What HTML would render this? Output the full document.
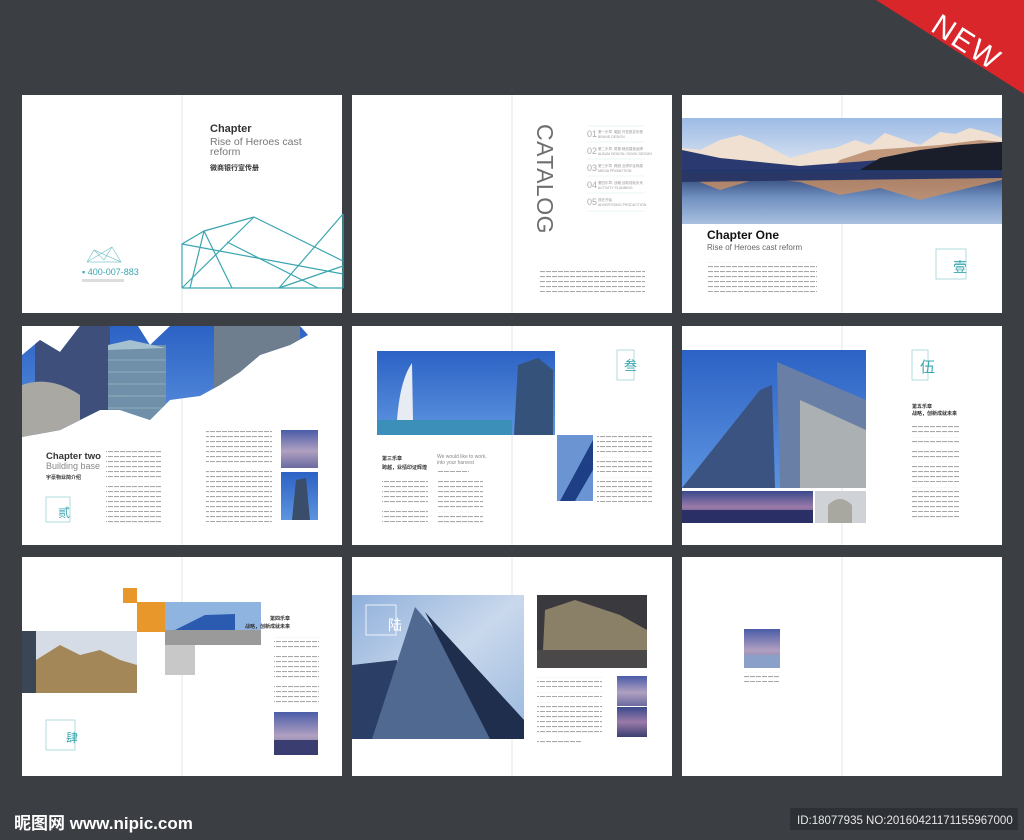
<!DOCTYPE html>
<html><head><meta charset="utf-8"><style>
html,body{margin:0;padding:0;background:#3b3e43;}
svg{display:block;font-family:"Liberation Sans","Noto Sans CJK SC",sans-serif;}
</style></head><body>
<svg width="1024" height="840" viewBox="0 0 1024 840" xmlns="http://www.w3.org/2000/svg">
<defs>
<pattern id="tl" width="6" height="5" patternUnits="userSpaceOnUse"><rect width="5" height="1.1" y="1" fill="#a8a8a8"/></pattern>
<linearGradient id="sky" x1="0" y1="0" x2="0" y2="1"><stop offset="0" stop-color="#9dbbe6"/><stop offset="1" stop-color="#dfe7f2"/></linearGradient>
<linearGradient id="lake" x1="0" y1="0" x2="0" y2="1"><stop offset="0" stop-color="#1f3566"/><stop offset="0.5" stop-color="#6f8fbf"/><stop offset="1" stop-color="#a9c0e0"/></linearGradient>
<linearGradient id="blue" x1="0" y1="0" x2="0" y2="1"><stop offset="0" stop-color="#2c62c4"/><stop offset="1" stop-color="#5d94e0"/></linearGradient>
<linearGradient id="cloud" x1="0" y1="0" x2="1" y2="1"><stop offset="0" stop-color="#8fb0db"/><stop offset="0.5" stop-color="#c9d8ec"/><stop offset="1" stop-color="#9ab8de"/></linearGradient>
<linearGradient id="night" x1="0" y1="0" x2="0" y2="1"><stop offset="0" stop-color="#3a4a8c"/><stop offset="0.5" stop-color="#9a7aa8"/><stop offset="1" stop-color="#3a3f70"/></linearGradient>
<linearGradient id="dusk" x1="0" y1="0" x2="0" y2="1"><stop offset="0" stop-color="#4a5ca8"/><stop offset="0.55" stop-color="#b0a0c0"/><stop offset="1" stop-color="#6a6aa0"/></linearGradient>
<clipPath id="c4"><path d="M22 355 L40 340 L60 352 L80 326 L138 326 L150 345 L170 326 L300 326 L308 335 L290 345 L260 355 L240 372 L220 385 L200 396 L170 400 L150 420 L120 410 L100 410 L60 430 L22 437Z"/></clipPath>
</defs>

<polygon points="876,0 1024,0 1024,94" fill="#d9262a"/>
<text x="965" y="52" fill="#fff" font-size="30" transform="rotate(33 965 45)" text-anchor="middle" letter-spacing="2">NEW</text>

<g fill="#fff">
<rect x="22" y="95" width="320" height="218"/><rect x="352" y="95" width="320" height="218"/><rect x="682" y="95" width="320" height="218"/>
<rect x="22" y="326" width="320" height="219"/><rect x="352" y="326" width="320" height="219"/><rect x="682" y="326" width="320" height="219"/>
<rect x="22" y="557" width="320" height="219"/><rect x="352" y="557" width="320" height="219"/><rect x="682" y="557" width="320" height="219"/>
</g>
<g stroke="#e4e6ea" stroke-width="1">
<line x1="182" y1="95" x2="182" y2="313"/><line x1="512" y1="95" x2="512" y2="313"/><line x1="842" y1="95" x2="842" y2="313"/>
<line x1="182" y1="326" x2="182" y2="545"/><line x1="512" y1="326" x2="512" y2="545"/><line x1="842" y1="326" x2="842" y2="545"/>
<line x1="182" y1="557" x2="182" y2="776"/><line x1="512" y1="557" x2="512" y2="776"/><line x1="842" y1="557" x2="842" y2="776"/>
</g>

<!-- Spread 1 -->
<text x="210" y="132" font-size="11" font-weight="bold" fill="#333">Chapter</text>
<text x="210" y="145" font-size="10.5" fill="#777">Rise of Heroes cast</text>
<text x="210" y="155" font-size="10.5" fill="#777">reform</text>
<text x="210" y="170" font-size="7" font-weight="bold" fill="#333">微商银行宣传册</text>
<g stroke="#3aa6b0" stroke-width="1.2" fill="none">
<polyline points="182,288 182,244 204,231 232,288"/>
<line x1="182" y1="288" x2="343" y2="288"/>
<line x1="204" y1="231" x2="254" y2="217"/>
<line x1="182" y1="288" x2="254" y2="217"/>
<line x1="254" y1="217" x2="343" y2="261"/>
<line x1="182" y1="244" x2="343" y2="274"/>
<line x1="204" y1="231" x2="190" y2="288"/>
<line x1="343" y1="214" x2="279" y2="288"/>
<line x1="227" y1="242" x2="318" y2="288"/>
<line x1="279" y1="288" x2="343" y2="266"/>
<line x1="343" y1="214" x2="343" y2="288"/>
</g>
<g stroke="#7ec6cc" stroke-width="0.7" fill="none"><polyline points="87,262 94,250 104,260 112,247 121,262 87,262"/><line x1="94" y1="250" x2="121" y2="262"/><line x1="87" y1="262" x2="112" y2="247"/></g>
<text x="82" y="275" font-size="9" fill="#3aa6b0">▪ 400-007-883</text>
<rect x="82" y="279" width="42" height="3" fill="#ddd"/>

<!-- Spread 2 -->
<text x="537" y="124" font-size="23" fill="#6f6f6f" transform="rotate(90 537 124)" letter-spacing="0.5">CATALOG</text>
<g font-size="9" fill="#aaa">
<text x="587" y="137">01</text><text x="587" y="154">02</text><text x="587" y="171">03</text><text x="587" y="188">04</text><text x="587" y="205">05</text>
</g>
<g fill="#999" font-size="3.5">
<text x="598" y="133">第一乐章. 崛起 开发蜕变历程</text><text x="598" y="138">BRAND DESIGN</text>
<text x="598" y="150">第二乐章. 筑基 精品建造品牌</text><text x="598" y="155">ALBUM DESIGN / BOOK DESIGN</text>
<text x="598" y="167">第三乐章. 跨越 业绩印证辉煌</text><text x="598" y="172">MEDIA PROMOTION</text>
<text x="598" y="184">第四乐章. 战略 创新成就未来</text><text x="598" y="189">ACTIVITY PLANNING</text>
<text x="598" y="201">现在开始</text><text x="598" y="206">ADVERTISING PRODUCTION</text>
</g>
<g stroke="#d8eaee" stroke-width="0.6"><line x1="587" y1="126" x2="645" y2="126"/><line x1="587" y1="142" x2="645" y2="142"/><line x1="587" y1="159" x2="645" y2="159"/><line x1="587" y1="176" x2="645" y2="176"/><line x1="587" y1="193" x2="645" y2="193"/><line x1="587" y1="211" x2="645" y2="211"/></g>
<rect x="540" y="268" width="105" height="24" fill="url(#tl)"/>

<!-- Spread 3 -->
<rect x="682" y="118" width="320" height="52" fill="url(#sky)"/>
<polygon points="682,148 700,150 720,140 740,135 760,142 790,158 820,150 835,148 855,140 870,145 885,133 905,140 920,145 940,132 955,134 970,128 990,133 1002,138 1002,170 682,170" fill="#efe0d2"/>
<polygon points="840,160 870,150 900,148 940,145 980,140 1002,142 1002,170 830,170" fill="#b07a5a" opacity="0.7"/>
<polygon points="682,150 720,158 760,162 800,166 840,163 880,160 920,152 960,147 1002,142 1002,170 682,170" fill="#2a3a70"/>
<polygon points="880,158 920,150 960,145 1002,142 1002,170 860,170" fill="#1a1d2a"/>
<rect x="682" y="170" width="320" height="54" fill="url(#lake)"/>
<polygon points="682,175 720,190 760,178 800,182 840,195 880,188 920,200 960,190 1002,180 1002,175" fill="#c98e62" opacity="0.8"/>
<polygon points="682,172 1002,172 1002,178 682,182" fill="#2a3766"/>
<text x="707" y="239" font-size="12" font-weight="bold" fill="#111">Chapter One</text>
<text x="707" y="250" font-size="8" fill="#666">Rise of Heroes cast reform</text>
<rect x="707" y="262" width="110" height="11" fill="url(#tl)"/>
<rect x="707" y="276" width="110" height="16" fill="url(#tl)"/>
<rect x="936" y="249" width="30" height="30" fill="none" stroke="#9fd3d6" stroke-width="0.8"/>
<text x="953" y="272" font-size="14" fill="#3aa6b0">壹</text>

<!-- Spread 4 -->
<g clip-path="url(#c4)">
<rect x="22" y="326" width="290" height="112" fill="url(#blue)"/>
<rect x="35" y="326" width="75" height="110" fill="#3d4f7a"/>
<rect x="108" y="345" width="58" height="90" fill="#6f90a8"/>
<polygon points="108,345 130,340 166,348 108,350" fill="#a5c0cf"/>
<rect x="214" y="326" width="86" height="70" fill="#6e7e8e"/>
<path d="M22 385 Q50 375 80 395 L80 440 L22 440Z" fill="#a9a8a3"/>
<g stroke="#e8eef4" stroke-width="0.6" opacity="0.6"><line x1="108" y1="360" x2="166" y2="360"/><line x1="108" y1="372" x2="166" y2="372"/><line x1="108" y1="384" x2="166" y2="384"/><line x1="108" y1="396" x2="166" y2="396"/><line x1="108" y1="408" x2="166" y2="408"/></g>
</g>
<text x="46" y="459" font-size="9.5" font-weight="bold" fill="#333">Chapter two</text>
<text x="46" y="469" font-size="9" fill="#888">Building base</text>
<text x="46" y="479" font-size="5" font-weight="bold" fill="#333">宇豪物业简介绍</text>
<rect x="106" y="448" width="55" height="30" fill="url(#tl)"/>
<rect x="106" y="482" width="55" height="30" fill="url(#tl)"/>
<rect x="106" y="514" width="55" height="10" fill="url(#tl)"/>
<rect x="206" y="430" width="66" height="35" fill="url(#tl)"/>
<rect x="206" y="468" width="66" height="45" fill="url(#tl)"/>
<rect x="206" y="514" width="66" height="8" fill="url(#tl)"/>
<rect x="281" y="430" width="37" height="38" fill="url(#dusk)"/>
<rect x="281" y="472" width="37" height="48" fill="url(#blue)"/>
<polygon points="292,520 296,480 306,478 310,520" fill="#3a4d6a"/>
<rect x="46" y="497" width="24" height="25" fill="none" stroke="#9fd3d6" stroke-width="0.8"/>
<text x="58" y="517" font-size="12" fill="#3aa6b0">贰</text>

<!-- Spread 5 -->
<rect x="377" y="351" width="135" height="84" fill="url(#blue)"/>
<rect x="377" y="420" width="135" height="15" fill="#3c8fb8"/>
<path d="M397 420 Q400 380 412 363 L413 420Z" fill="#e6ecf2"/>
<rect x="512" y="351" width="43" height="84" fill="url(#blue)"/>
<polygon points="514,435 518,365 538,358 553,370 553,435" fill="#34527a"/>
<rect x="557" y="435" width="36" height="66" fill="#6b95d2"/>
<polygon points="560,501 593,440 593,470 575,501" fill="#1e3f86"/>
<rect x="617" y="350" width="17" height="30" fill="none" stroke="#9fd3d6" stroke-width="0.8"/>
<text x="624" y="370" font-size="13" fill="#3aa6b0">叁</text>
<text x="382" y="460" font-size="5" font-weight="bold" fill="#333">第三乐章</text>
<text x="382" y="469" font-size="5" font-weight="bold" fill="#333">跨越，业绩印证辉煌</text>
<text x="437" y="458" font-size="5" fill="#888">We would like to work,</text>
<text x="437" y="464" font-size="5" fill="#888">into your harvest</text>
<rect x="437" y="468" width="32" height="4" fill="url(#tl)"/>
<rect x="382" y="481" width="46" height="22" fill="url(#tl)"/>
<rect x="382" y="510" width="46" height="12" fill="url(#tl)"/>
<rect x="437" y="481" width="46" height="27" fill="url(#tl)"/>
<rect x="437" y="512" width="46" height="14" fill="url(#tl)"/>
<rect x="597" y="432" width="55" height="20" fill="url(#tl)"/>
<rect x="597" y="457" width="55" height="15" fill="url(#tl)"/>
<rect x="597" y="477" width="55" height="25" fill="url(#tl)"/>

<!-- Spread 6 -->
<rect x="682" y="350" width="184" height="138" fill="url(#blue)"/>
<polygon points="682,488 760,390 772,385 775,488" fill="#3a5380"/>
<polygon points="780,488 777,362 866,400 866,488" fill="#6a7fa5"/>
<polygon points="800,488 800,400 866,430 866,488" fill="#c8c6b8" opacity="0.7"/>
<rect x="682" y="491" width="131" height="32" fill="url(#night)"/>
<rect x="682" y="510" width="131" height="13" fill="#2a2f66"/>
<rect x="815" y="491" width="51" height="32" fill="#cfd2d6"/>
<path d="M828 523 L828 505 Q840 493 852 505 L852 523Z" fill="#a9a8a0"/>
<rect x="912" y="350" width="16" height="30" fill="none" stroke="#9fd3d6" stroke-width="0.8"/>
<text x="920" y="372" font-size="15" fill="#3aa6b0">伍</text>
<text x="912" y="408" font-size="5" font-weight="bold" fill="#333">第五乐章</text>
<text x="912" y="415" font-size="5" font-weight="bold" fill="#333">战略，创新成就未来</text>
<rect x="912" y="424" width="47" height="9" fill="url(#tl)"/>
<rect x="912" y="437" width="47" height="9" fill="url(#tl)"/>
<rect x="912" y="450" width="47" height="9" fill="url(#tl)"/>
<rect x="912" y="462" width="47" height="20" fill="url(#tl)"/>
<rect x="912" y="487" width="47" height="25" fill="url(#tl)"/>
<rect x="912" y="515" width="47" height="4" fill="url(#tl)"/>

<!-- Spread 7 -->
<rect x="123" y="588" width="14" height="15" fill="#e8972b"/>
<rect x="137" y="602" width="28" height="30" fill="#e8972b"/>
<rect x="165" y="645" width="30" height="30" fill="#c8c8c8"/>
<rect x="165" y="602" width="96" height="43" fill="#8fb4e0"/>
<rect x="165" y="630" width="96" height="15" fill="#9a9a9a"/>
<polygon points="175,630 205,615 235,614 235,630" fill="#2b5bb0"/>
<rect x="22" y="631" width="115" height="62" fill="#d6dce6"/>
<rect x="22" y="631" width="14" height="62" fill="#3a4555"/>
<polygon points="36,693 36,660 60,645 80,655 100,650 120,660 137,665 137,693" fill="#a38758"/>
<text x="290" y="620" font-size="5" font-weight="bold" fill="#333" text-anchor="end">第四乐章</text>
<text x="290" y="628" font-size="5" font-weight="bold" fill="#333" text-anchor="end">战略，创新成就未来</text>
<rect x="274" y="637" width="45" height="14" fill="url(#tl)"/>
<rect x="274" y="655" width="45" height="24" fill="url(#tl)"/>
<rect x="274" y="683" width="45" height="20" fill="url(#tl)"/>
<rect x="274" y="712" width="44" height="43" fill="url(#dusk)"/>
<rect x="274" y="740" width="44" height="15" fill="#3a3d70"/>
<rect x="46" y="720" width="29" height="30" fill="none" stroke="#9fd3d6" stroke-width="0.8"/>
<text x="66" y="742" font-size="12" fill="#3aa6b0">肆</text>

<!-- Spread 8 -->
<rect x="352" y="595" width="172" height="144" fill="url(#cloud)"/>
<polygon points="352,739 352,665 397,660 397,739" fill="#2a3e66"/>
<polygon points="372,739 415,607 524,733 524,739" fill="#4f6990"/>
<polygon points="425,612 524,720 524,739 490,739" fill="#1e2e4c"/>
<rect x="366" y="605" width="30" height="30" fill="none" stroke="#fff" stroke-width="0.8"/>
<text x="388" y="630" font-size="14" fill="#fff">陆</text>
<rect x="537" y="595" width="110" height="73" fill="#3a3a3e"/>
<polygon points="543,650 545,610 575,600 620,615 647,630 647,650" fill="#8a8068"/>
<rect x="537" y="650" width="110" height="18" fill="#4a4848"/>
<rect x="537" y="677" width="65" height="10" fill="url(#tl)"/>
<rect x="537" y="692" width="65" height="5" fill="url(#tl)"/>
<rect x="537" y="702" width="65" height="10" fill="url(#tl)"/>
<rect x="537" y="716" width="65" height="20" fill="url(#tl)"/>
<rect x="537" y="740" width="45" height="4" fill="url(#tl)"/>
<rect x="617" y="676" width="30" height="30" fill="url(#dusk)"/>
<rect x="617" y="707" width="30" height="30" fill="url(#night)"/>

<!-- Spread 9 -->
<rect x="744" y="629" width="36" height="39" fill="url(#dusk)"/>
<rect x="744" y="655" width="36" height="13" fill="#8aa0c8"/>
<rect x="744" y="672" width="36" height="10" fill="url(#tl)"/>

<!-- footer -->
<text x="14" y="829" font-size="17" font-weight="bold" fill="#fff">昵图网 www.nipic.com</text>
<rect x="790" y="808" width="228" height="22" fill="#2d3034"/>
<text x="797" y="824" font-size="11.5" fill="#e8e8e8">ID:18077935 NO:20160421171155967000</text>
</svg>
</body></html>
